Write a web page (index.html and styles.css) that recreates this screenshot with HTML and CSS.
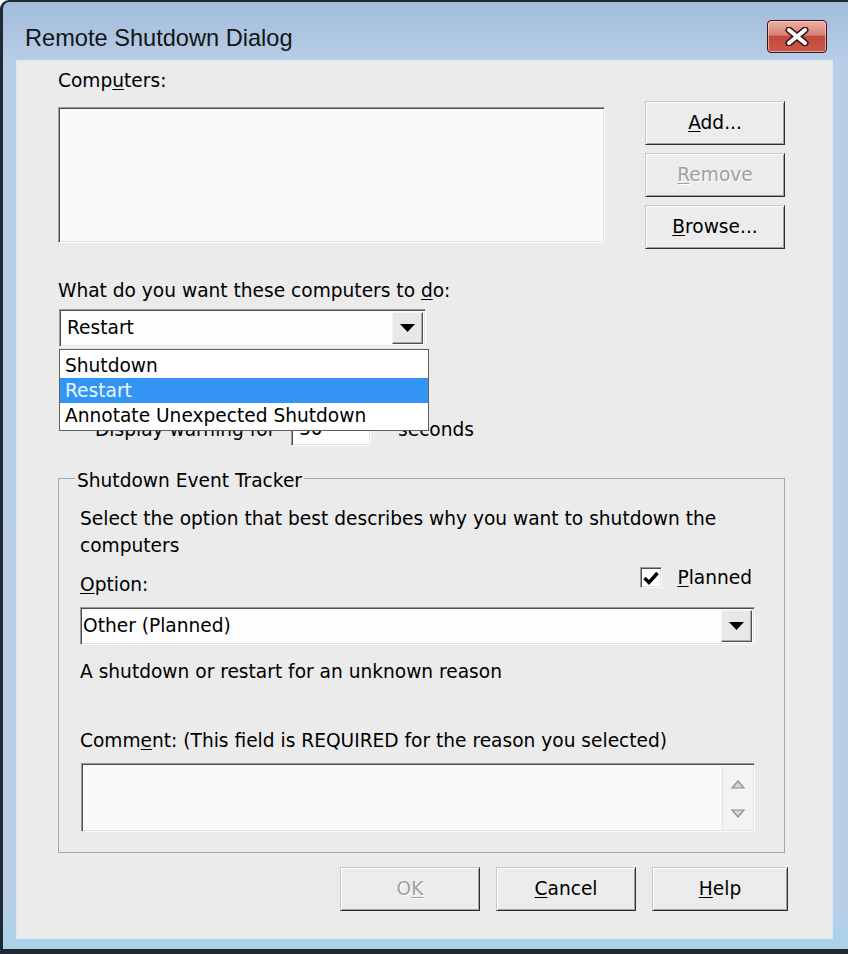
FILE: index.html
```html
<!DOCTYPE html>
<html lang="en">
<head>
  <meta charset="UTF-8">
  <meta name="viewport" content="width=device-width, initial-scale=1.0">
  <title>Remote Shutdown Dialog</title>
  <link rel="stylesheet" href="styles.css">
</head>
<body>

  <div class="window">
    <!-- Barra de titulo -->
    <div class="title-bar">
      <span class="title">Remote Shutdown Dialog</span>
      <button class="close-btn" aria-label="Close">
        <svg width="24" height="19" viewBox="0 0 24 19">
          <path d="M4 3 L20 16 M20 3 L4 16" stroke="#3d1414" stroke-width="7" stroke-linecap="round"/>
          <path d="M4 3 L20 16 M20 3 L4 16" stroke="#fff" stroke-width="4" stroke-linecap="round"/>
        </svg>
      </button>
    </div>

    <div class="client">
      <!-- Lista de equipos -->
      <div class="top-row">
        <div class="computers">
          <div class="label">Comp<u>u</u>ters:</div>
          <div class="listbox sunken"></div>
        </div>
        <div class="side-buttons">
          <button class="btn"><u>A</u>dd...</button>
          <button class="btn disabled"><u>R</u>emove</button>
          <button class="btn"><u>B</u>rowse...</button>
        </div>
      </div>

      <div class="label action-label">What do you want these computers to <u>d</u>o:</div>

      <div class="combo-wrap">
        <div class="combo sunken">
          <span class="combo-text">Restart</span>
          <span class="combo-arrow">
            <svg width="15" height="8" viewBox="0 0 15 8"><polygon points="0,0 15,0 7.5,8" fill="#000"/></svg>
          </span>
        </div>
        <!-- Lista desplegada -->
        <ul class="drop-list">
          <li>Shutdown</li>
          <li class="selected">Restart</li>
          <li>Annotate Unexpected Shutdown</li>
        </ul>
      </div>

      <div class="warning-row">
        <span class="warning-label">Display warning for</span>
        <span class="number-box sunken">30</span>
        <span class="seconds">seconds</span>
      </div>

      <!-- Shutdown Event Tracker -->
      <fieldset class="tracker">
        <legend>Shutdown Event Tracker</legend>
        <div class="desc">Select the option that best describes why you want to shutdown the<br>computers</div>

        <div class="option-row">
          <span class="label"><u>O</u>ption:</span>
          <span class="planned">
            <span class="checkbox sunken">
              <svg width="18" height="16" viewBox="0 0 18 16"><path d="M2.5 8 L7 12.5 L15.5 3" fill="none" stroke="#000" stroke-width="3.4"/></svg>
            </span>
            <span><u>P</u>lanned</span>
          </span>
        </div>

        <div class="combo combo-other sunken">
          <span class="combo-text">Other (Planned)</span>
          <span class="combo-arrow">
            <svg width="15" height="8" viewBox="0 0 15 8"><polygon points="0,0 15,0 7.5,8" fill="#000"/></svg>
          </span>
        </div>

        <div class="label reason">A shutdown or restart for an unknown reason</div>

        <div class="label comment-label">Comm<u>e</u>nt: (This field is REQUIRED for the reason you selected)</div>
        <div class="comment-box sunken">
          <div class="scroll">
            <svg width="14" height="9" viewBox="0 0 14 9"><polygon points="7,1 13,8 1,8" fill="#d6d6d6" stroke="#8c8c8c" stroke-width="1.2"/></svg>
            <svg width="14" height="9" viewBox="0 0 14 9"><polygon points="1,1 13,1 7,8" fill="#d6d6d6" stroke="#8c8c8c" stroke-width="1.2"/></svg>
          </div>
        </div>
      </fieldset>

      <!-- Botones del dialogo -->
      <div class="dialog-buttons">
        <button class="btn disabled btn-ok">O<u>K</u></button>
        <button class="btn"><u>C</u>ancel</button>
        <button class="btn btn-help"><u>H</u>elp</button>
      </div>
    </div>
  </div>

</body>
</html>
```

FILE: styles.css
```css
/* Estilos generales */
body {
  margin: 0;
  overflow: hidden;
  background: #fff;
  font-family: "DejaVu Sans", sans-serif;
  font-size: 18.6px;
  color: #000;
}

u {
  text-decoration: underline;
  text-underline-offset: 2px;
}

/* Marco de la ventana */
.window {
  width: 864px;
  height: 954px;
  box-sizing: border-box;
  border: 3px solid #1f2a36;
  border-top-width: 2px;
  border-bottom-width: 5px;
  border-radius: 9px 9px 0 0;
  background: linear-gradient(#a2bcdb, #b8cde6 60px, #b9cee6 900px, #a9d3ea);
  display: flex;
  flex-direction: column;
}

.title-bar {
  height: 59px;
  display: flex;
  align-items: flex-start;
  padding: 0 34px 0 22px;
}

.title {
  font-family: "Liberation Sans", Arial, sans-serif;
  font-size: 23.6px;
  line-height: 28px;
  margin-top: 22px;
  color: #151515;
}

.close-btn {
  margin-left: auto;
  margin-top: 18px;
  width: 60px;
  height: 33px;
  border: 1px solid #3e1212;
  border-radius: 4px;
  background: linear-gradient(#eab2a8, #d98072 45%, #c24b3c 50%, #c9574a);
  box-shadow: inset 0 0 0 1px rgba(255, 220, 210, 0.6);
  display: flex;
  justify-content: center;
  align-items: center;
  padding: 0;
}

/* Area cliente */
.client {
  margin-left: 14px;
  width: 815px;
  height: 877px;
  box-sizing: border-box;
  background: #ebebeb;
  box-shadow: 0 0 0 1px #dde7f2;
  padding: 8px 47px 0 41px;
}

.label {
  line-height: 24px;
}

.sunken {
  box-sizing: border-box;
  border: 1px solid;
  border-color: #9a9a9a #fbfbfb #fbfbfb #9a9a9a;
  box-shadow: inset 1px 1px 0 #4e4e4e, inset -1px -1px 0 #e3e3e3;
  background: #fafafa;
}

.top-row {
  display: flex;
  justify-content: space-between;
}

.computers {
  width: 547px;
}

.listbox {
  margin-top: 14px;
  height: 136px;
}

.side-buttons {
  margin-top: 32px;
  width: 140px;
  display: flex;
  flex-direction: column;
  gap: 8px;
}

/* Botones clasicos */
.btn {
  height: 44px;
  box-sizing: border-box;
  border: 1px solid;
  border-color: #c9c9c9 #2e2e2e #2e2e2e #c9c9c9;
  box-shadow: inset 1px 1px 0 #fdfdfd, inset -1px -1px 0 #a0a0a0;
  background: #ececec;
  font-family: inherit;
  font-size: 18.6px;
  line-height: 24px;
  color: #000;
  padding: 0;
}

.btn.disabled {
  color: #a0a0a0;
  text-shadow: 1px 1px 0 #fff;
}

.action-label {
  margin-top: 30px;
}

/* Combo desplegable */
.combo-wrap {
  position: relative;
  margin-top: 6px;
  margin-left: 1px;
  width: 367px;
}

.combo {
  height: 38px;
  display: flex;
  align-items: center;
  padding: 2px 2px 2px 7px;
  background: #fdfdfd;
}

.combo-text {
  flex: 1;
  line-height: 24px;
}

.combo-arrow {
  width: 31px;
  align-self: stretch;
  box-sizing: border-box;
  border: 1px solid;
  border-color: #f4f4f4 #505050 #505050 #f4f4f4;
  box-shadow: inset -1px -1px 0 #a8a8a8;
  background: #e8e8e8;
  display: flex;
  justify-content: center;
  align-items: center;
}

.drop-list {
  position: absolute;
  top: 40px;
  left: 0;
  width: 370px;
  box-sizing: border-box;
  margin: 0;
  padding: 3px 0 2px;
  list-style: none;
  border: 1px solid #5e5e5e;
  background: #fff;
  z-index: 2;
}

.drop-list li {
  line-height: 25px;
  padding-left: 5px;
}

.drop-list li.selected {
  background: #3394f4;
  color: #eaf4ff;
}

/* Fila de aviso (tapada por la lista) */
.warning-row {
  margin-top: 65px;
  height: 34px;
  display: flex;
  align-items: center;
  padding-left: 37px;
}

.warning-label {
  width: 196px;
}

.number-box {
  width: 80px;
  height: 34px;
  padding-left: 7px;
  line-height: 32px;
  background: #fff;
}

.seconds {
  margin-left: 27px;
}

/* Grupo Shutdown Event Tracker */
.tracker {
  margin: 17px 0 0;
  width: 727px;
  box-sizing: border-box;
  border: 1px solid #a6a6a6;
  padding: 12px 29px 20px 21px;
  min-width: 0;
}

.tracker legend {
  padding: 6px 2px 0;
  margin-left: -5px;
  line-height: 24px;
}

.desc {
  line-height: 27px;
}

.option-row {
  margin-top: 14px;
  height: 24px;
  display: flex;
  justify-content: space-between;
  align-items: flex-start;
  line-height: 24px;
}

.planned {
  display: flex;
  align-items: center;
  gap: 15px;
  margin-top: -6px;
  margin-right: 3px;
  line-height: 21px;
}

.checkbox {
  width: 22px;
  height: 21px;
  background: #fff;
  display: flex;
  justify-content: center;
  align-items: center;
}

.combo-other {
  margin-top: 10px;
  padding-left: 2px;
}

.reason {
  margin-top: 15px;
}

.comment-label {
  margin-top: 45px;
}

.comment-box {
  margin-top: 10px;
  margin-left: 1px;
  width: 674px;
  height: 69px;
  display: flex;
  justify-content: flex-end;
  padding: 2px 1px 1px 2px;
}

.scroll {
  width: 30px;
  border-left: 1px solid #e2e2e2;
  background: #f3f3f3;
  display: flex;
  flex-direction: column;
  align-items: center;
  justify-content: space-between;
  padding: 14px 0 12px;
}

/* Botones inferiores */
.dialog-buttons {
  margin-top: 14px;
  margin-right: -3px;
  display: flex;
  justify-content: flex-end;
  gap: 16px;
}

.dialog-buttons .btn {
  width: 140px;
}

.dialog-buttons .btn-help {
  width: 136px;
}
```
